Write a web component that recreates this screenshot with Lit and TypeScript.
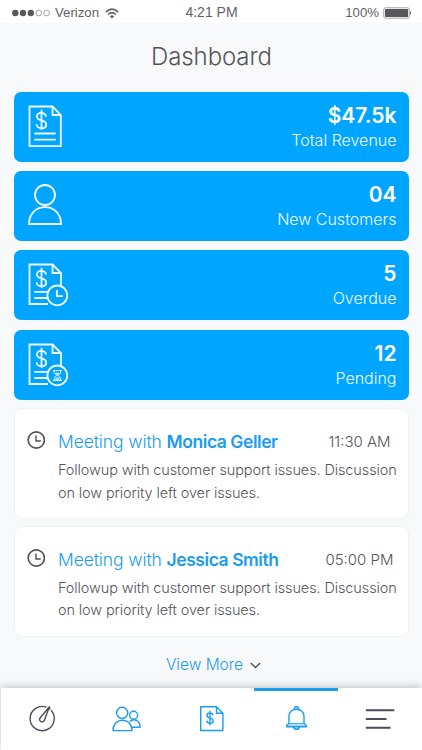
import { LitElement, html, css, svg } from "lit";
import { customElement, property } from "lit/decorators.js";
import { classMap } from "lit/directives/class-map.js";

const dollar = svg`<path d="M18.600 12.200C18 9.400 16 8.400 14 8.400c-2.800 0-4.600 1.600-4.600 3.700 0 2.400 2 3.200 4.600 3.900 2.800.7 4.700 1.700 4.700 4 0 2.400-2 3.900-4.700 3.900-2.700 0-4.700-1.500-4.900-4M14 5.400v20" transform="translate(-.5 -.6)"/>`;

const invoice = svg`
  <path d="M1.500 1.500H24.500L32.800 10V41.200H1.500Z"/>
  <path d="M24.500 1.500V10H33"/>
  ${dollar}
  <path d="M7 28.500H27M7 34.700H27" stroke-linecap="round"/>`;

const badged = (badge: unknown) => svg`
  <path d="M20 41H1.500V1.500H24.500L33 10V22"/>
  <path d="M24.500 1.500V10H33"/>
  ${dollar}
  <path d="M7 28.800H20M7 35H19" stroke-linecap="round"/>
  <circle cx="29.300" cy="32.400" r="9.900"/>
  ${badge}`;

const icons: Record<string, unknown> = {
  invoice,
  customer: svg`<circle cx="17" cy="11" r="10"/><path d="M1 40C1 17.500 33 17.500 33 40Z"/>`,
  overdue: badged(svg`<path d="M28.900 27v6.200h6"/>`),
  pending: badged(svg`<path d="M24.900 27.500h9M24.900 37.500h9M25.900 27.700c0 3 2 3.500 2.700 4.800-.7 1.300-2.700 1.800-2.700 4.800M32.900 27.700c0 3-2 3.500-2.700 4.800.7 1.300 2.700 1.800 2.700 4.800M27.900 30.200h3l-1.500 2zM27.400 36.200l2-1.800 2 1.800z" stroke-width="1"/>`),
};

@customElement("stat-card")
class StatCard extends LitElement {
  @property() icon = "invoice";
  @property() value = "";
  @property() label = "";

  static styles = css`
    :host {
      display: flex;
      justify-content: space-between;
      height: 70px;
      box-sizing: border-box;
      padding: 12px 12px 0 14px;
      border-radius: 7px;
      background: #00a5ff;
      color: #fff;
    }
    svg { width: 44px; height: 46px; margin-top: 1px; fill: none; stroke: #f2fdff; stroke-width: 1.8; overflow: visible; }
    .text { text-align: right; }
    .value { font-size: 21px; font-weight: 600; line-height: 23px; letter-spacing: 0; }
    .label { font-size: 16px; font-weight: 320; line-height: 27px; letter-spacing: 0; color: #eefaff; }
  `;

  render() {
    return html`
      <svg viewBox="0 0 44 46">${icons[this.icon]}</svg>
      <div class="text">
        <div class="value">${this.value}</div>
        <div class="label">${this.label}</div>
      </div>`;
  }
}

@customElement("meeting-card")
class MeetingCard extends LitElement {
  @property() name = "";
  @property() time = "";

  static styles = css`
    :host {
      display: grid;
      grid-template-columns: 31px 1fr 78px;
      align-content: start;
      height: 111px;
      box-sizing: border-box;
      padding: 21px 9px 0 12px;
      border: 1px solid #f0f1f5;
      border-radius: 8px;
      background: #fff;
    }
    svg { width: 18px; height: 18px; margin-top: 1px; fill: none; stroke: #55525f; stroke-width: 1.7; }
    .title { font-size: 17.500px; line-height: 24px; font-weight: 300; letter-spacing: -0.1px; color: #1a9cf0; white-space: nowrap; }
    .title b { font-weight: 600; letter-spacing: -0.45px; }
    .time { font-size: 15px; line-height: 23px; font-weight: 350; color: #55565a; text-align: center; white-space: nowrap; }
    .note { grid-column: 2 / 4; margin: 5.500px -10px 0 0; font-size: 14.500px; line-height: 22.300px; font-weight: 300; letter-spacing: -0.12px; color: #55565a; white-space: nowrap; }
  `;

  render() {
    return html`
      <svg viewBox="0 0 18 18"><circle cx="9.300" cy="9" r="8.100"/><path d="M9 4.500V10H13.800" stroke-width="1.400"/></svg>
      <div class="title">Meeting with <b>${this.name}</b></div>
      <div class="time">${this.time}</div>
      <div class="note">Followup with customer support issues. Discussion<br>on low priority left over issues.</div>`;
  }
}

const tabs = [
  { key: "gauge", art: svg`<path d="M17.500 2.200A12.100 12.100 0 1 0 22 5.200M20.300 2L11.200 12.700A2.500 2.500 0 1 0 15.500 15ZM20.300 2L21 4.500"/>` },
  { key: "people", art: svg`<circle cx="8.200" cy="7.900" r="5.600"/><path d="M-1 25.600C-1 11.800 18 11.800 18 25.600Z"/><circle cx="19.600" cy="10.300" r="4"/><path d="M15.600 16.600C20 12.700 26 15.200 26.100 22.300H18"/>` },
  { key: "bill", art: svg`<path d="M2.700 1.700H18.500L24.900 8.200V25.500H2.700ZM18.500 1.700V8.200H24.900"/><path d="M15 10.200C14.600 8.500 13.300 8 12 8c-1.800 0-3 1-3 2.500 0 3.500 6.200 1.700 6.200 5.300 0 1.600-1.400 2.600-3.200 2.600-1.800 0-3.100-1-3.300-2.700M12 5.800V20.500"/>` },
  { key: "bell", art: svg`<g transform="translate(-.5 0)"><path d="M11.800 3.900a2.200 2.200 0 1 1 4.400 0M6.500 18.300V11C6.500 2 21.500 2 21.500 11V18.300M6.500 18.300L4.100 20.500V21.800H23.900V20.500L21.500 18.300M11 22a3.100 3.100 0 0 0 6 0"/><path d="M6.500 18.700H21.500" stroke-width="1"/><path d="M5 20.300H23" opacity=".4"/></g>` },
  { key: "menu", art: svg`<path d="M-1.200 5.300H27.300M-1.200 14H19.500M-1.200 22.700H23.500" stroke-width="1.900"/>` },
];

@customElement("app-root")
class AppRoot extends LitElement {
  static styles = css`
    :host {
      display: flex;
      flex-direction: column;
      height: 750px;
      overflow: hidden;
      background: #f8f9fb;
      color: #55565a;
      font-family: Inter, "Liberation Sans", sans-serif;
    }
    .status {
      display: grid;
      grid-template-columns: 1fr auto 1fr;
      height: 23px;
      padding: 0 10px 0 11px;
      background: #fff;
      font: 13.200px/24px "Liberation Sans", sans-serif;
      color: #626265;
    }
    .clock { font-size: 14px; }
    .carrier, .power { display: flex; align-items: center; padding-top: 1px; }
    .power { justify-content: flex-end; }
    .dots { width: 39px; height: 8px; margin-right: 5px; }
    .wifi { width: 14px; height: 11px; margin-left: 6px; }
    .battery { width: 29px; height: 12px; margin-left: 4px; }
    h1 { margin: 15.500px 0 0; font-size: 24px; line-height: 36px; font-weight: 320; letter-spacing: -0.1px; padding-left: 1px; text-align: center; color: #55565a; }
    .stats { display: flex; flex-direction: column; gap: 9.200px; margin: 17.500px 13.500px 0 14.300px; }
    .meetings { display: flex; flex-direction: column; gap: 6.700px; margin: 8.400px 13.500px 0 14px; }
    .more { display: flex; align-items: center; justify-content: center; gap: 7px; height: 51.300px; padding: 4px 0 0 5px; box-sizing: border-box; font-size: 15.500px; font-weight: 300; color: #1a9cf0; }
    .more svg { width: 11px; height: 7px; margin-top: 3px; fill: none; stroke: #55565a; stroke-width: 1.500; }
    nav {
      display: grid;
      grid-template-columns: repeat(5, 84.500px);
      height: 62px;
      flex: none;
      margin-left: 1px;
      box-sizing: border-box;
      background: #fff;
      box-shadow: 0 -2px 8px rgba(0, 0, 0, 0.2);
    }
    .tab { display: flex; justify-content: center; padding-top: 14px; border-top: 3px solid transparent; color: #1a9cf0; }
    .tab.active { border-color: #1a9cf0; margin: 0 1px 0 -1px; padding-left: 2px; }
    .tab.dark { color: #504c5c; }
    .tab svg { width: 28px; height: 28px; fill: none; stroke: currentColor; stroke-width: 1.400; stroke-linejoin: round; overflow: visible; }
  `;

  render() {
    return html`
      <div class="status">
        <div class="carrier">
          <svg class="dots" viewBox="0 0 39 8">
            ${[4.3, 12, 19.8, 27.7, 35.6].map((x, i) => svg`<circle cx=${x} cy="4" r=${i < 3 ? 3.2 : 2.9} fill=${i < 3 ? "#59595c" : "none"} stroke=${i < 3 ? "none" : "#7d7d80"} stroke-width=".7"/>`)}
          </svg>
          <span>Verizon</span>
          <svg class="wifi" viewBox="0 0 14 11" fill="none" stroke="#626265" stroke-width="1.500">
            <path d="M.8 4.100Q7-1.800 13.200 4.100M3 6.500Q7 2.700 11 6.500"/>
            <path d="M4.800 8.300Q7 6.300 9.200 8.300L7 10.500Z" fill="#626265" stroke="none"/>
          </svg>
        </div>
        <span class="clock">4:21 PM</span>
        <div class="power">
          <span>100%</span>
          <svg class="battery" viewBox="0 0 29 12">
            <rect x=".8" y=".8" width="25.400" height="10.400" rx="1.500" fill="none" stroke="#a0a0a3" stroke-width="1"/>
            <rect x="2" y="2" width="23" height="8" rx=".5" fill="#59595c"/>
            <path d="M27 4q2 2 0 4z" fill="#59595c"/>
          </svg>
        </div>
      </div>
      <h1>Dashboard</h1>
      <section class="stats">
        <stat-card icon="invoice" value="$47.5k" label="Total Revenue"></stat-card>
        <stat-card icon="customer" value="04" label="New Customers"></stat-card>
        <stat-card icon="overdue" value="5" label="Overdue"></stat-card>
        <stat-card icon="pending" value="12" label="Pending"></stat-card>
      </section>
      <section class="meetings">
        <meeting-card name="Monica Geller" time="11:30 AM"></meeting-card>
        <meeting-card name="Jessica Smith" time="05:00 PM"></meeting-card>
      </section>
      <div class="more"><span>View More</span><svg viewBox="0 0 11 7"><path d="M.8 1L5.500 5.500L10.200 1"/></svg></div>
      <nav>
        ${tabs.map((t) => html`<div class=${classMap({ tab: true, active: t.key === "bell", dark: t.key === "gauge" || t.key === "menu" })}>
          <svg viewBox="0 0 28 28">${t.art}</svg>
        </div>`)}
      </nav>`;
  }
}
